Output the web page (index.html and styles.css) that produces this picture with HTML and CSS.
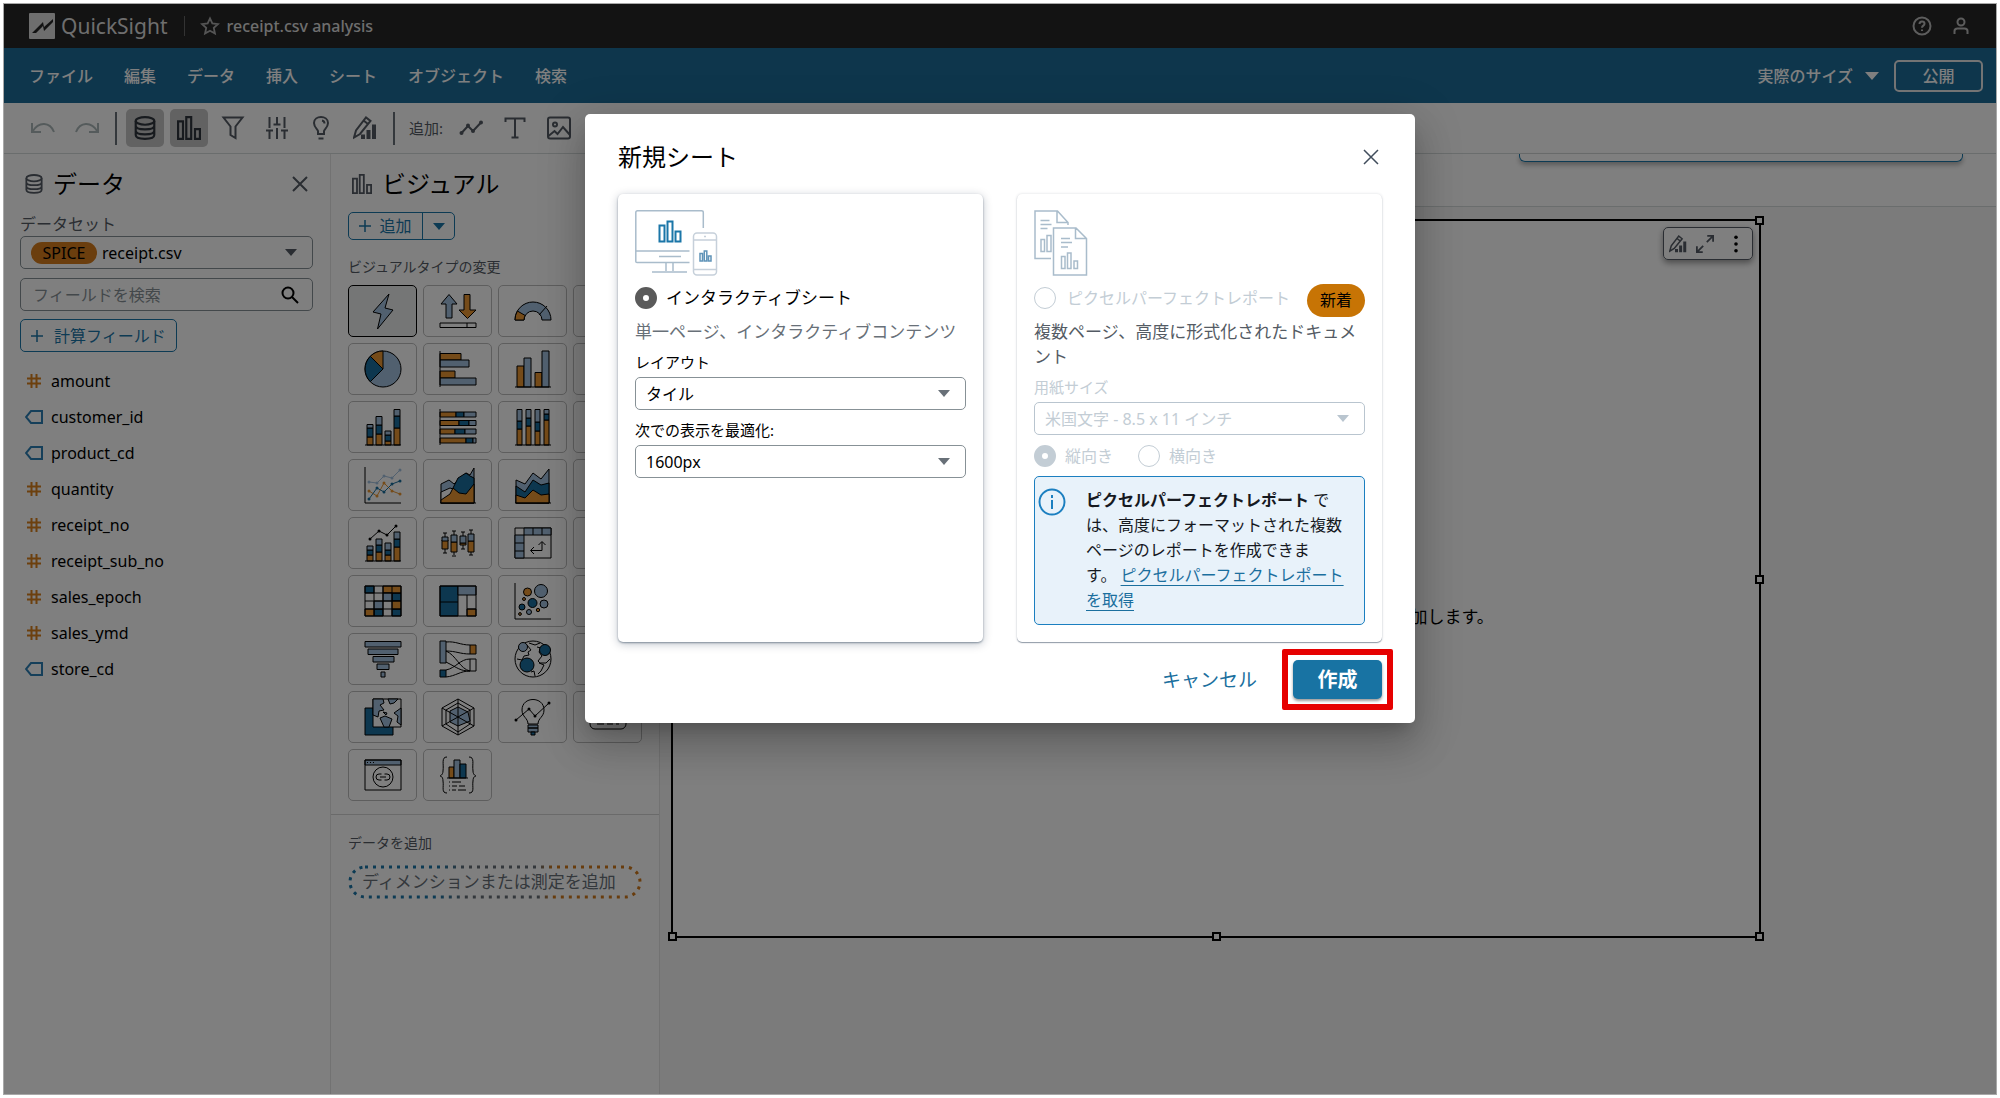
FILE: index.html
```html
<!DOCTYPE html>
<html lang="ja">
<head>
<meta charset="utf-8">
<meta name="viewport" content="width=device-width, initial-scale=1">
<title>receipt.csv analysis - QuickSight</title>
<link rel="stylesheet" href="styles.css">
</head>
<body>
<svg class="sprite" aria-hidden="true">
  <symbol id="db" viewBox="0 0 20 22"><ellipse cx="10" cy="4.500" rx="8.500" ry="3.500"/><path d="M1.500 4.500v13c0 4.600 17 4.600 17 0v-13M1.500 9c0 4.400 17 4.400 17 0M1.500 13.500c0 4.400 17 4.400 17 0"/></symbol>
  <symbol id="bars" viewBox="0 0 22 22"><path d="M1 5h4.500v16H1zM8.500 1h4.500v20H8.500zM16.500 12h4.500v9h-4.500z"/></symbol>
  <symbol id="close" viewBox="0 0 16 16"><path d="M1 1l14 14M15 1L1 15"/></symbol>
  <symbol id="caret" viewBox="0 0 14 8"><path d="M0 0h14L7 8z"/></symbol>
  <symbol id="plus" viewBox="0 0 12 12"><path d="M6 0v12M0 6h12"/></symbol>
  <symbol id="penchart" viewBox="0 0 24 24"><path d="M1 21.500l2-7L13 1.500l4.500 3.500L7 18zM10.500 4.500l4.500 3.500"/><path class="solid" d="M8 18.500h4V23H8zM13.500 14h4v9h-4zM19 8.500h4V23h-4z"/></symbol>
  <symbol id="hash" viewBox="0 0 16 16"><path d="M5.500 1v14M10.500 1v14M1 5.500h14M1 10.500h14"/></symbol>
  <symbol id="tag" viewBox="0 0 18 14"><path d="M6 1h11v12H6L1 7z"/></symbol>
  <symbol id="table" viewBox="0 0 36 36"><path d="M0 3h36v30H0zM0 10h36M0 18h36M0 26h36M12 3v30"/></symbol>
</svg>

<div class="app">
  <header class="topbar">
    <a class="brand" href="#">
      <svg class="logo" viewBox="0 0 26 26"><rect width="26" height="26" rx="1" fill="#ddd"/><path d="M3 20L14 9l1 5 9-8v3l-9 9-1-5-7 7z" fill="#262626"/></svg>
      QuickSight</a>
    <span class="topbar-rule"></span>
    <svg class="star" viewBox="0 0 20 20"><path d="M10 1.500l2.600 5.700 6.200.7-4.600 4.200 1.300 6.200-5.500-3.100-5.500 3.100 1.300-6.200L1.200 7.900l6.200-.7z"/></svg>
    <h1 class="doc-name">receipt.csv analysis</h1>
    <div class="topbar-end">
      <button class="icon-button" aria-label="ヘルプ"><svg width="20" height="20" viewBox="0 0 20 20"><circle cx="10" cy="10" r="8.500"/><path d="M7.500 8c0-3.500 5-3.200 5-.3 0 2-2.500 1.800-2.500 4M10 13.500v1.500"/></svg></button>
      <button class="icon-button" aria-label="アカウント"><svg width="16" height="18" viewBox="0 0 16 18"><circle cx="8" cy="5" r="3.500"/><path d="M1.500 17v-3q0-2.500 3-2.500h7q3 0 3 2.500v3"/></svg></button>
    </div>
  </header>

  <nav class="menubar">
    <a href="#">ファイル</a><a href="#">編集</a><a href="#">データ</a><a href="#">挿入</a><a href="#">シート</a><a href="#">オブジェクト</a><a href="#">検索</a>
    <div class="menubar-end">
      <button class="zoom-button">実際のサイズ<svg class="caret"><use href="#caret"/></svg></button>
      <button class="publish">公開</button>
    </div>
  </nav>

  <div class="toolbar">
    <button class="tool dim" aria-label="元に戻す"><svg width="24" height="24" viewBox="0 0 24 24"><path d="M1 7v9h9M1.500 15.500C8 5 19 6 23 16"/></svg></button>
    <button class="tool dim" aria-label="やり直し"><svg width="24" height="24" viewBox="0 0 24 24"><path d="M23 7v9h-9M22.500 15.500C16 5 5 6 1 16"/></svg></button>
    <span class="tool-rule"></span>
    <button class="tool on" aria-label="データ"><svg width="22" height="24"><use href="#db"/></svg></button>
    <button class="tool on" aria-label="ビジュアル"><svg width="24" height="24"><use href="#bars"/></svg></button>
    <button class="tool" aria-label="フィルター"><svg width="24" height="24" viewBox="0 0 24 24"><path d="M2.500 1.500h19l-7 9V22L9.500 19v-8.500z"/></svg></button>
    <button class="tool" aria-label="パラメータ"><svg width="24" height="24" viewBox="0 0 24 24"><path d="M4.500 1v11M1 14.500h7M4.500 14.500V23M12 1v7.500M8.500 8.500h7M12 12v11M19.500 1v11M16 14.500h7M19.500 14.500V23"/></svg></button>
    <button class="tool" aria-label="インサイト"><svg width="24" height="24" viewBox="0 0 24 24"><path d="M9 18v-3c0-1.500-4-3.500-4-8 0-8 14-8 14 0 0 4.500-4 6.500-4 8v3zM9.500 22.500h5M13 4.500q2.500.5 2.500 3"/></svg></button>
    <button class="tool" aria-label="テーマ"><svg width="24" height="24"><use href="#penchart"/></svg></button>
    <span class="tool-rule"></span>
    <span class="tool-label">追加:</span>
    <button class="tool" aria-label="ビジュアルを追加"><svg width="24" height="24" viewBox="0 0 24 24"><path d="M2.500 17L9 10l5 5 8-8.500"/><g class="solid"><circle cx="2.500" cy="17" r="2"/><circle cx="9" cy="9.500" r="2"/><circle cx="14" cy="15" r="2"/><circle cx="22" cy="6.500" r="2"/></g></svg></button>
    <button class="tool" aria-label="テキストを追加"><svg width="24" height="24" viewBox="0 0 24 24"><path d="M2.500 6V2.500h19V6M12 2.500v19M8.500 21.500h7"/></svg></button>
    <button class="tool" aria-label="画像を追加"><svg width="24" height="24" viewBox="0 0 24 24"><rect x="1" y="1.500" width="22" height="21" rx="2"/><circle cx="8" cy="8.500" r="2"/><path d="M1.500 20l6-5 3 3 5.500-7 7 8"/></svg></button>
  </div>

  <div class="workspace">
    <section class="panel data-panel">
      <div class="panel-head">
        <svg width="18" height="20"><use href="#db"/></svg>
        <h2>データ</h2>
        <button class="icon-button panel-close" aria-label="閉じる"><svg width="16" height="16"><use href="#close"/></svg></button>
      </div>
      <span class="field-label" id="dataset-label">データセット</span>
      <button class="box dataset" aria-labelledby="dataset-label" aria-haspopup="listbox"><span class="spice">SPICE</span><span>receipt.csv</span><svg class="caret"><use href="#caret"/></svg></button>
      <div class="box search">
        <input type="text" placeholder="フィールドを検索" aria-label="フィールドを検索">
        <svg width="18" height="18" viewBox="0 0 18 18"><circle cx="7" cy="7" r="5.500"/><path d="M11 11l6 6"/></svg>
      </div>
      <button class="box calc"><svg width="12" height="12"><use href="#plus"/></svg>計算フィールド</button>
      <ul class="fields">
        <li><svg class="hash"><use href="#hash"/></svg>amount</li>
        <li><svg class="tag"><use href="#tag"/></svg>customer_id</li>
        <li><svg class="tag"><use href="#tag"/></svg>product_cd</li>
        <li><svg class="hash"><use href="#hash"/></svg>quantity</li>
        <li><svg class="hash"><use href="#hash"/></svg>receipt_no</li>
        <li><svg class="hash"><use href="#hash"/></svg>receipt_sub_no</li>
        <li><svg class="hash"><use href="#hash"/></svg>sales_epoch</li>
        <li><svg class="hash"><use href="#hash"/></svg>sales_ymd</li>
        <li><svg class="tag"><use href="#tag"/></svg>store_cd</li>
      </ul>
    </section>

    <section class="panel visual-panel">
      <div class="panel-head">
        <svg width="20" height="20"><use href="#bars"/></svg>
        <h2>ビジュアル</h2>
      </div>
      <div class="split">
        <button class="split-main"><svg width="12" height="12"><use href="#plus"/></svg>追加</button>
        <button class="split-more" aria-label="追加オプション"><svg class="caret"><use href="#caret"/></svg></button>
      </div>
      <h3>ビジュアルタイプの変更</h3>
      <div class="types">
        <button class="type selected" aria-label="自動グラフ"><svg viewBox="0 0 36 36"><path class="l" d="M24 1L8 19l8 2-3.500 15L28 17l-8-2z"/></svg></button>
        <button class="type" aria-label="KPI"><svg viewBox="0 0 36 36"><path class="l" d="M9 1.500l8 9.500h-5v14H6V11H1z"/><path class="o" d="M24 1.500h6V17h6l-8.500 8.500L19 17h5z"/><path d="M0 30h36v4.500H0zM27 30v4.500"/></svg></button>
        <button class="type" aria-label="ゲージ"><svg viewBox="0 0 36 36"><path class="l" d="M0 27a18 18 0 0 1 36 0h-9a9 9 0 0 0-18 0z"/><path class="o" d="M0 27a18 18 0 0 1 2.400-9l7.800 4.500A9 9 0 0 0 9 27z"/><path d="M24 22l8-9"/></svg></button>
        <button class="type" aria-label="ドーナツ"><svg><use href="#table"/></svg></button>

        <button class="type" aria-label="円グラフ"><svg viewBox="0 0 36 36"><circle class="l" cx="18" cy="18" r="18"/><path class="o" d="M18 18V0A18 18 0 0 0 5.300 5.300z"/><path class="d" d="M18 18L5.300 5.300a18 18 0 0 0 0 25.400z"/></svg></button>
        <button class="type" aria-label="横棒"><svg viewBox="0 0 36 36"><path class="o" d="M0 2.500h21V9H0zM0 20h15v7H0z"/><path class="l" d="M0 9h29v7H0zM0 27h36v7H0z"/><path d="M0 0v36"/></svg></button>
        <button class="type" aria-label="縦棒"><svg viewBox="0 0 36 36"><path class="o" d="M2 15h7v21H2zM20 21.500h7V36h-7z"/><path class="l" d="M9 7h7v29H9zM27 0h7v36h-7z"/><path d="M0 36h36"/></svg></button>
        <button class="type" aria-label="積み上げ横棒"><svg><use href="#table"/></svg></button>

        <button class="type" aria-label="積み上げ縦棒"><svg viewBox="0 0 36 36"><path class="o" d="M2 28h6v8H2zM11 25h6v11h-6zM20 32h6v4h-6zM29 19h6v17h-6z"/><path class="d" d="M2 19h6v9H2zM11 16h6v9h-6zM20 26h6v6h-6zM29 7h6v12h-6z"/><path class="l" d="M2 15.500h6V19H2zM11 7.500h6V16h-6zM20 22h6v4h-6zM29 .5h6V7h-6z"/><path d="M0 36h36"/></svg></button>
        <button class="type" aria-label="100% 横棒"><svg viewBox="0 0 36 36"><path class="o" d="M0 3h16v5H0zM0 11.500h19v5H0zM0 20h15v5H0zM0 29h26v5H0z"/><path class="d" d="M16 3h8v5h-8zM19 11.500h10v5H19zM15 20h10v5H15zM26 29h7v5h-7z"/><path class="l" d="M24 3h12v5H24zM29 11.500h7v5h-7zM25 20h11v5H25zM33 29h3v5h-3z"/><path d="M0 0v36"/></svg></button>
        <button class="type" aria-label="100% 縦棒"><svg viewBox="0 0 36 36"><path class="o" d="M2 20h5v16H2zM11 17h5v19h-5zM20 22h5v14h-5zM29 11h5v25h-5z"/><path class="d" d="M2 12h5v8H2zM11 9h5v8h-5zM20 13h5v9h-5zM29 5h5v6h-5z"/><path class="l" d="M2 .5h5V12H2zM11 .5h5V9h-5zM20 .5h5V13h-5zM29 .5h5V5h-5z"/><path d="M0 36h36"/></svg></button>
        <button class="type" aria-label="ウォーターフォール"><svg><use href="#table"/></svg></button>

        <button class="type" aria-label="折れ線"><svg viewBox="0 0 36 36"><path d="M0 0v36h36"/><g class="line-l"><path d="M4 15l8 1 7-7 8 2 8-8"/><path class="dot" d="M4 15h0M12 16h0M19 9h0M27 11h0M35 3h0"/></g><g class="line-o"><path d="M4 24l8 5 7-13 8 8 8 3"/><path class="dot" d="M4 24h0M12 29h0M19 16h0M27 24h0M35 27h0"/></g><g class="line-d"><path d="M4 32l8-11 7 4 8-8 8-3"/><path class="dot" d="M4 32h0M12 21h0M19 25h0M27 17h0M35 14h0"/></g></svg></button>
        <button class="type" aria-label="面"><svg viewBox="0 0 36 36"><path class="l" d="M1 17l8-4 5 4 12-11 4 2 4-7v35H1z"/><path class="paper" d="M1 25l9-4 3 1v14H1z"/><path class="d" d="M13 21l5-10 8-5 4 3 4 2v25H13z"/><path class="o" d="M1 33l9-6 3-6 6 5 7 1 8-10v19H1z"/><path d="M0 36h36"/></svg></button>
        <button class="type" aria-label="積み上げ面"><svg viewBox="0 0 36 36"><path class="l" d="M1 13l9 4 8-11 8 6 8-10v34H1z"/><path class="d" d="M1 19l9 6 8-12 8 5 8-2v20H1z"/><path class="o" d="M1 28l9 3 8-8 8 5 8-1v9H1z"/><path d="M0 36h36"/></svg></button>
        <button class="type" aria-label="滝"><svg><use href="#table"/></svg></button>

        <button class="type" aria-label="コンボ"><svg viewBox="0 0 36 36"><path class="o" d="M2 30h6v6H2zM11 27h6v9h-6zM20 30h6v6h-6zM29 22h6v14h-6z"/><path class="d" d="M2 25h6v5H2zM11 20h6v7h-6zM20 25h6v5h-6zM29 14h6v8h-6z"/><path class="l" d="M2 21h6v4H2zM11 14h6v6h-6zM20 18h6v7h-6zM29 7h6v7h-6z"/><path d="M0 36h36M5 14l9-8 8 4 9-9"/><path class="dot" d="M5 14h0M14 6h0M22 10h0M31 1h0"/></svg></button>
        <button class="type" aria-label="箱ひげ図"><svg viewBox="0 0 36 36"><path d="M3 8h4M5 8v20M3 28h4M12 6h4M14 6v24M12 31h4M21 7h4M23 7v17M21 24h4M29 5h4M31 5v25M29 30h4"/><path class="o" d="M2 15h6v9H2zM11 17h6v10h-6zM20 18h6v2h-6zM28 16h6v11h-6z"/><path class="l" d="M2 12h6v4H2zM11 10h6v7h-6zM20 11h6v7h-6zM28 9h6v7h-6z"/></svg></button>
        <button class="type" aria-label="ピボットテーブル"><svg viewBox="0 0 36 36"><path d="M0 3h36v30H0z"/><path class="l" d="M9 3h27v7H9zM0 10h9v23H0z"/><path d="M18 3v7M27 3v7M0 18h9M0 26h9M16 25.500h11V17M19 22l-3.500 3.500L19 29M23.500 20l3.500-3.500 3.500 3.500"/></svg></button>
        <button class="type" aria-label="テーブル"><svg><use href="#table"/></svg></button>

        <button class="type" aria-label="ヒートマップ"><svg viewBox="0 0 36 36"><path class="d" d="M0 3h9v7H0zM27 10h9v8h-9zM9 26h9v7H9zM27 26h9v7h-9z"/><path class="o" d="M18 3h18v7H18zM27 18h9v8h-9zM0 26h9v7H0z"/><path class="l" d="M18 10h9v8h-9zM9 18h9v8H9z"/><path d="M0 3h36v30H0zM9 3v30M18 3v30M27 3v30M0 10h36M0 18h36M0 26h36"/></svg></button>
        <button class="type" aria-label="ツリーマップ"><svg viewBox="0 0 36 36"><path class="d" d="M0 3h18v30H0zM0 19h18"/><path class="l" d="M18 3h18v9H18z"/><path class="o" d="M27 26h9v7h-9z"/><path d="M0 3h36v30H0zM27 12v21M27 26h9"/></svg></button>
        <button class="type" aria-label="散布図"><svg viewBox="0 0 36 36"><path d="M0 0v36h36"/><g class="l"><circle cx="26" cy="8" r="6.500"/><circle cx="29" cy="21" r="4"/><circle cx="14" cy="29" r="2.500"/></g><g class="o"><circle cx="12.500" cy="9" r="4"/><circle cx="9" cy="16" r="1.500"/><circle cx="23" cy="27" r="1.700"/><circle cx="5" cy="31" r="1.400"/></g><g class="d"><circle cx="17.500" cy="20" r="4.500"/><circle cx="7" cy="24" r="3"/></g></svg></button>
        <button class="type" aria-label="ヒストグラム"><svg><use href="#table"/></svg></button>

        <button class="type" aria-label="ファネル"><svg viewBox="0 0 36 36"><path class="l" d="M0 .5h36V6H0zM3 8h30v5.500H3zM8 15.500h21V21H8zM12 23h12v5.500H12zM16 31h4v5h-4z"/></svg></button>
        <button class="type" aria-label="サンキー"><svg viewBox="0 0 36 36"><path class="l" d="M0 0h6v22H0z"/><path class="d" d="M0 29h6v7H0z"/><path class="o" d="M30 4h6v9h-6z"/><path d="M30 18h6v12h-6zM6 1c10-1 14 3 24 3M6 10c10 0 14 3 24 3M6 10c10 4 14 18 24 20M6 21c12 6 14 9 24 9M6 29c10-2 14-11 24-11M6 36c10-1 14-6 24-6"/></svg></button>
        <button class="type" aria-label="ポイントマップ"><svg viewBox="0 0 36 36"><circle cx="18" cy="18" r="18"/><path d="M12 4l4 5-3 2 1 3-5 1-2 4-5-1M14 2l6 2 5-2M22 6l4 1-2 4 3 4-4 5 2 2 6 0 4-4M16 31l3-1 1 5M24 22l5 2-3 6-3 3"/><circle class="l" cx="8" cy="6" r="4.500"/><circle class="d" cx="30" cy="9" r="5.500"/><circle class="d" cx="12" cy="24" r="7"/></svg></button>
        <button class="type" aria-label="ワードクラウド"><svg><use href="#table"/></svg></button>

        <button class="type" aria-label="塗りつぶしマップ"><svg viewBox="0 0 36 36"><path class="d" d="M0 9h28v27H0z"/><path class="paper" d="M8 0h28v28H8z"/><path class="l" d="M8 0h10l1 4-4 2 4 5-5 1-1 6-5-2zM23 0h10l-4 4-4 1zM29 14l7-5v17l-4-3 1-6zM15 19l5-2 7 3-3 8h-5zM18 13l4 1-1 2z"/></svg></button>
        <button class="type" aria-label="レーダー"><svg viewBox="0 0 36 36"><path d="M18 0l16 9v18l-16 9-16-9V9zM18 4l12 7v14l-12 8-12-8V11z"/><path class="l" d="M18 8l10 5 2 9-12 5-8-4V12z"/><path d="M18 0v36M2 9l32 18M34 9L2 27"/></svg></button>
        <button class="type" aria-label="インサイト"><svg viewBox="0 0 36 36"><path d="M13 25c0-6-6-7-6-14 0-14 22-14 22 0 0 7-6 8-6 14z"/><path class="l" d="M13 26h10v3H13zM13 29h10v4H13z"/><path class="d" d="M16 33h4v3h-4z"/><path d="M1 21l13-11 6 7L34 4"/><path class="dot" d="M1 21h0M14 10h0M20 17h0M34 4h0"/></svg></button>
        <button class="type" aria-label="カスタムビジュアル"><svg viewBox="0 0 36 36"><rect x="0" y="7" width="36" height="23" rx="5"/><path d="M7 25h7M17 25h6M26 25h3M7 19h9M19 19h8"/></svg></button>

        <button class="type" aria-label="カスタムコンテンツ"><svg viewBox="0 0 36 36"><path class="l" d="M0 3h36v5H0z"/><path d="M0 3h36v30H0z"/><circle cx="18" cy="20" r="10"/><path d="M16.500 17H14a3 3 0 0 0 0 6h2.500M19.500 17H22a3 3 0 0 1 0 6h-2.500M15 20h6M2 5.500h1M5 5.500h1M8 5.500h1"/></svg></button>
        <button class="type" aria-label="Highcharts"><svg viewBox="0 0 36 36"><path class="o" d="M9 10h5v11H9z"/><path class="l" d="M14 3h6v18h-6z"/><path class="d" d="M20 7h6v14h-6z"/><path d="M7 21h21M7 0C1 0 4 7 3 14c0 4-3 5-3 5s3 0 3 5c1 6-2 12 4 12M29 0c6 0 3 7 4 14 0 4 3 5 3 5s-3 0-3 5c-1 6 2 12-4 12M9 25h1M12 25h9M9 29h1M12 29h5M19 29h6M9 33h1M12 33h4M18 33h8"/></svg></button>
      </div>
      <div class="add-data">
        <h3>データを追加</h3>
        <div class="drop">
          <svg width="100%" height="34"><defs><linearGradient id="pill"><stop offset="0.300" stop-color="#1b76a8"/><stop offset="0.400" stop-color="#687078"/><stop offset="0.650" stop-color="#687078"/><stop offset="0.700" stop-color="#d0791a"/></linearGradient></defs><rect class="pill" x="2" y="2" width="290" height="30" rx="15"/></svg>
          <span>ディメンションまたは測定を追加</span>
        </div>
      </div>
    </section>

    <main class="sheet">
      <div class="sheet-head"><div class="sheet-callout"></div></div>
      <div class="canvas">
        <div class="visual">
          <div class="visual-tools">
            <button class="icon-button" aria-label="プロパティ"><svg width="20" height="20"><use href="#penchart"/></svg></button>
            <button class="icon-button" aria-label="最大化"><svg width="20" height="20" viewBox="0 0 20 20"><path d="M12 8l7-7M12.500 1H19v6.500M8 12l-7 7M1 12.500V19h6.500"/></svg></button>
            <button class="icon-button more" aria-label="メニュー"><svg width="20" height="20" viewBox="0 0 20 20"><circle cx="10" cy="2.500" r="2"/><circle cx="10" cy="10" r="2"/><circle cx="10" cy="17.500" r="2"/></svg></button>
          </div>
          <p>ビジュアルを作成するには、ディメンション、または測定を追加します。</p>
          <i class="handle nw"></i><i class="handle ne"></i><i class="handle e"></i><i class="handle se"></i><i class="handle s"></i><i class="handle sw"></i>
        </div>
      </div>
    </main>
  </div>

  <div class="backdrop">
    <form class="modal" role="dialog" aria-labelledby="modal-title">
      <div class="modal-head">
        <h2 id="modal-title">新規シート</h2>
        <button type="button" class="icon-button" aria-label="閉じる"><svg width="16" height="16"><use href="#close"/></svg></button>
      </div>
      <div class="cards">
        <div class="card active">
          <svg class="art" width="82" height="66" viewBox="0 0 82 66"><path d="M54.500 41H.8V2.500Q.8.800 2.500.8h64Q68.300.8 68.300 2.500V18M.8 41v10.500Q.8 52.500 2 52.500h52.500M24 46.500h22M31 53v8M38 53v8M17 62h35"/><path class="strong" d="M24.500 15.500h5v16h-5zM32.500 11.500h5v20h-5zM40.500 21.500h5v10h-5z"/><g class="phone"><rect x="58.500" y="23" width="23" height="42" rx="3.500"/><path d="M58.500 30h23M58.500 59.500h23M69 26.500h2"/></g><path class="mid" d="M65 43.500h2.500v7.500H65zM69.300 41h2.500v10h-2.500zM73.500 46h2.500v5h-2.500z"/></svg>
          <label class="choice"><input type="radio" name="kind" checked><span>インタラクティブシート</span></label>
          <p class="desc">単一ページ、インタラクティブコンテンツ</p>
          <label class="form-label" for="layout">レイアウト</label>
          <div class="select"><select id="layout"><option>タイル</option></select><svg class="caret"><use href="#caret"/></svg></div>
          <label class="form-label" for="optimize">次での表示を最適化:</label>
          <div class="select"><select id="optimize"><option>1600px</option></select><svg class="caret"><use href="#caret"/></svg></div>
        </div>
        <div class="card off">
          <svg class="art" width="54" height="66" viewBox="0 0 54 66"><path d="M17 48.500H1V1h22.500L34 12.500V15M23 1v11.500h11M6.500 10.500h9M6.500 14.500h11M6.500 18.500h7M7 29.500h3.500v12H7zM17 25.500h-4v16h4z"/><path d="M19.500 18H42l10.500 10.500V65h-33zM41.500 18v10.500h11M27 28.500h9M27 32.500h11M27 37h7M27.500 46.500h3.500v12h-3.500zM33.500 43h3.500v15.500h-3.500zM40 51h3.500v7.500H40z"/></svg>
          <div class="choice-row"><label class="choice"><input type="radio" name="kind" disabled><span>ピクセルパーフェクトレポート</span></label><span class="badge">新着</span></div>
          <p class="desc">複数ページ、高度に形式化されたドキュメ<br>ント</p>
          <label class="form-label" for="paper">用紙サイズ</label>
          <div class="select"><select id="paper" disabled><option>米国文字 - 8.5 x 11 インチ</option></select><svg class="caret"><use href="#caret"/></svg></div>
          <div class="orient">
            <label class="choice"><input type="radio" name="orient" checked disabled><span>縦向き</span></label>
            <label class="choice"><input type="radio" name="orient" disabled><span>横向き</span></label>
          </div>
          <div class="info">
            <svg width="28" height="28" viewBox="0 0 28 28"><circle cx="14" cy="14" r="12.500"/><path d="M14 12v9M14 7v3"/></svg>
            <p><strong>ピクセルパーフェクトレポート</strong> で<br>は、高度にフォーマットされた複数<br>ページのレポートを作成できま<br>す。 <a href="#">ピクセルパーフェクトレポート<br>を取得</a></p>
          </div>
        </div>
      </div>
      <div class="modal-foot">
        <button type="button" class="cancel">キャンセル</button>
        <span class="highlight"><button type="button" class="create">作成</button></span>
      </div>
    </form>
  </div>
</div>
</body>
</html>
```
FILE: styles.css
```css
* { box-sizing: border-box; }

body {
  margin: 0;
  padding: 3px;
  background: #fff;
  color: #000;
  font: 16px/24px "Noto Sans", "Noto Sans CJK JP", sans-serif;
}

h1, h2, h3, p, ul { margin: 0; padding: 0; font-weight: 400; }
button, input, select { font: inherit; color: inherit; margin: 0; }
button { padding: 0; border: 0; background: none; }
svg { flex: none; overflow: visible; fill: none; stroke: currentColor; stroke-width: 2; }
.sprite { position: absolute; width: 0; height: 0; }
.solid { fill: currentColor; stroke: none; }
.caret { width: 12px; height: 7px; fill: currentColor; stroke: none; }
.icon-button { display: flex; align-items: center; justify-content: center; }

.app {
  position: relative;
  display: flex;
  flex-direction: column;
  min-height: calc(100vh - 6px);
  border: 1px solid #a8a8a8;
}

/* Top bar */
.topbar {
  display: flex;
  align-items: center;
  height: 44px;
  padding: 0 27px 0 25px;
  background: #262626;
  color: #ddd;
}
.brand { display: flex; align-items: center; gap: 6px; color: inherit; font-size: 21px; text-decoration: none; }
.logo { width: 26px; height: 26px; stroke: none; }
.topbar-rule { width: 1px; height: 20px; margin: 0 16px; background: #666; }
.star { width: 18px; height: 18px; margin-right: 8px; color: #aaa; }
.doc-name { font-size: 16px; font-weight: 500; }
.topbar-end { display: flex; gap: 21px; margin-left: auto; color: #bbb; }

/* Menu bar */
.menubar {
  display: flex;
  align-items: center;
  gap: 31px;
  height: 55px;
  padding: 0 13px 0 25px;
  background: #1c6c98;
  color: #fff;
  font-weight: 500;
}
.menubar a { color: inherit; text-decoration: none; }
.menubar-end { display: flex; gap: 15px; margin-left: auto; }
.zoom-button { display: flex; align-items: center; gap: 12px; font-weight: 500; }
.menubar .caret { width: 14px; height: 8px; }
.publish { width: 89px; height: 32px; border: 2px solid #e8e8e8; border-radius: 5px; font-weight: 500; }

/* Tool bar */
.toolbar {
  display: flex;
  align-items: center;
  gap: 6px;
  height: 51px;
  padding: 0 20px;
  border-bottom: 1px solid #d5dbdb;
  background: #fff;
  color: #545b64;
}
.tool { display: flex; align-items: center; justify-content: center; width: 38px; height: 38px; border-radius: 5px; }
.tool.dim { color: #aab7b8; }
.tool.on { background: #c4c4c4; color: #2f353d; }
.tool-rule { width: 2px; height: 33px; margin: 0 3px; background: #687078; }
.tool-label { margin: 0 3px 0 5px; font-size: 15px; }

/* Workspace */
.workspace { display: flex; flex: 1; background: #fff; }
.panel { flex: none; border-right: 1px solid #e4e4e4; }
.panel-head { display: flex; align-items: center; height: 32px; color: #545b64; }
.panel-head h2 { margin-left: 10px; color: #000; font-size: 24px; line-height: 32px; }
.panel-close { margin-left: auto; }

.data-panel { width: 327px; padding: 14px 17px 0 16px; }
.data-panel .panel-head { padding: 0 5px; }
.field-label { display: block; margin-top: 12px; color: #545b64; }
.box {
  display: flex;
  align-items: center;
  width: 100%;
  height: 33px;
  border: 1px solid #879196;
  border-radius: 5px;
}
.dataset { gap: 5px; padding: 0 15px 0 10px; }
.dataset .caret { margin-left: auto; color: #545b64; }
.spice { width: 66px; border-radius: 11px; background: #d67c1c; color: #000; line-height: 22px; }
.search { margin-top: 9px; padding: 0 13px 0 12px; }
.search svg { color: #000; }
.search input { flex: 1; min-width: 0; padding: 0; border: 0; outline: 0; background: none; }
.search input::placeholder { color: #879196; opacity: 1; }
.calc { gap: 11px; width: 157px; margin-top: 8px; padding-left: 10px; border-color: #1b76a8; color: #1b76a8; }
.calc svg, .split svg { stroke-width: 1.5px; }
.fields { margin-top: 11px; list-style: none; }
.fields li { display: flex; align-items: center; gap: 8px; height: 36px; padding-left: 5px; }
.fields svg { width: 18px; height: 16px; }
.hash { color: #d9801c; }
.tag { color: #2b7fb5; }

.visual-panel { width: 329px; padding: 14px 17px 0; }
.visual-panel .panel-head { padding: 0 4px; }
.split { display: flex; width: 107px; height: 28px; margin-top: 12px; border: 1px solid #1b76a8; border-radius: 5px; color: #1b76a8; }
.split-main { display: flex; flex: 1; align-items: center; justify-content: center; gap: 8px; }
.split-more { width: 32px; border-left: 1px solid #1b76a8; line-height: 0; }
h3 { color: #545b64; font-size: 14px; line-height: 20px; }
.visual-panel > h3 { margin-top: 17px; }
.types { display: grid; grid-template-columns: repeat(4, 1fr); gap: 6px; margin-top: 8px; }
.type { display: flex; align-items: center; justify-content: center; height: 52px; border: 1px solid #bcbcbc; border-radius: 5px; }
.type.selected { border: 1px solid #000; background: #eaeded; }
.type svg { width: 36px; height: 36px; color: #000; stroke-width: 1; }
.type .l { fill: #a3c1de; }
.type .d { fill: #1b6f9e; }
.type .o { fill: #ea9733; }
.type .paper { fill: #fff; }
.type .line-l { stroke: #a3c1de; }
.type .line-o { stroke: #ea9733; }
.type .line-d { stroke: #1b6f9e; }
.type .dot { stroke-width: 3; stroke-linecap: round; }
.add-data { margin: 13px -17px 0; padding: 18px 17px; border-top: 1px solid #d5d5d5; }
.drop { display: grid; align-items: center; margin-top: 12px; color: #687078; }
.drop > * { grid-area: 1 / 1; }
.drop span { padding-left: 14px; font-size: 17px; }
.pill { stroke: url(#pill); stroke-width: 3; stroke-dasharray: 3 5; }

.sheet { display: flex; flex: 1; flex-direction: column; min-width: 0; }
.sheet-head { display: flex; justify-content: flex-end; height: 53px; padding-right: 33px; border-bottom: 1px solid #d5dbdb; }
.sheet-callout { width: 444px; height: 8px; border: 1px solid #1b76a8; border-top: 0; border-radius: 0 0 6px 6px; box-shadow: 0 3px 5px rgba(0, 0, 0, 0.3); }
.canvas { flex: 1; padding: 12px 235px 12px 11px; background: #f7f7f7; }
.visual {
  position: relative;
  display: flex;
  flex-direction: column;
  align-items: center;
  height: 719px;
  padding: 6px;
  border: 2px solid #000;
  background: #fff;
}
.visual p { margin-top: 345px; font-size: 17px; white-space: nowrap; }
.visual-tools {
  display: flex;
  align-items: center;
  align-self: flex-end;
  gap: 9px;
  height: 33px;
  padding: 0 7px 0 5px;
  border: 1px solid #545b64;
  border-radius: 5px;
  box-shadow: 0 3px 6px rgba(0, 0, 0, 0.4);
  color: #545b64;
}
.visual-tools svg { width: 18px; height: 18px; }
.visual-tools .more { margin-left: 4px; color: #000; }
.visual-tools .more svg { fill: currentColor; stroke: none; }
.handle { position: absolute; width: 9px; height: 9px; border: 2px solid #000; background: #fff; }
.nw { top: -5px; left: -5px; }
.ne { top: -5px; right: -5px; }
.e { top: calc(50% - 4px); right: -5px; }
.se { right: -5px; bottom: -5px; }
.s { bottom: -5px; left: calc(50% - 4px); }
.sw { bottom: -5px; left: -5px; }

/* Dialog */
.backdrop {
  position: absolute;
  inset: 0;
  display: flex;
  align-items: flex-start;
  justify-content: center;
  padding-top: 110px;
  background: rgba(0, 0, 0, 0.5);
}
.modal {
  width: 830px;
  padding: 0 33px;
  border-radius: 5px;
  background: #fff;
  box-shadow: 0 11px 15px -7px rgba(0, 0, 0, 0.2), 0 24px 38px 3px rgba(0, 0, 0, 0.14), 0 9px 46px 8px rgba(0, 0, 0, 0.12);
}
.modal-head { display: flex; align-items: center; justify-content: space-between; padding: 23px 3px 17px 0; }
.modal-head h2 { font-size: 24px; line-height: 40px; }
.modal-head svg { color: #414d5c; stroke-width: 1.5px; }
.cards { display: grid; grid-template-columns: 1fr 1fr; gap: 34px; }
.card { padding: 16px 17px 17px; border-radius: 5px; }
.card.active { box-shadow: 0 1px 2px rgba(0, 28, 56, 0.4), 0 2px 10px rgba(0, 28, 56, 0.25); }
.card.off { box-shadow: 0 1px 1px rgba(0, 28, 56, 0.4), 0 0 3px rgba(0, 28, 56, 0.15); color: #c3cdd5; }
.art { display: block; stroke: #a9bccb; stroke-width: 1.5px; }
.art .strong { stroke: #1b76a8; stroke-width: 2px; }
.art .mid { stroke: #5f93b8; }
.art .phone { stroke: #c6d0da; }
.choice { display: flex; align-items: center; gap: 9px; height: 24px; font-size: 17px; }
.card > .choice, .choice-row { margin-top: 10px; }
.choice input {
  flex: none;
  width: 22px;
  height: 22px;
  border: 1px solid #c3cdd5;
  border-radius: 50%;
  appearance: none;
  background: #fff;
}
.choice input:checked { border: 8px solid #5a5a5a; }
.choice input:disabled:checked { border-color: #c3cdd5; }
.choice-row { display: flex; justify-content: space-between; height: 24px; }
.choice-row .choice { gap: 11px; font-size: 16px; }
.badge { width: 58px; height: 33px; margin-top: -2px; border-radius: 17px; background: #c77405; color: #000; line-height: 32px; text-align: center; }
.desc { margin-top: 9px; color: #687078; font-size: 17px; line-height: 25px; white-space: nowrap; }
.off .desc { color: #545b64; }
.form-label { display: block; margin-top: 7px; font-size: 15px; line-height: 22px; }
.select { display: grid; align-items: center; margin-top: 4px; }
.select + .form-label { margin-top: 9px; }
.select > * { grid-area: 1 / 1; }
.select select {
  width: 100%;
  height: 33px;
  padding: 0 10px;
  border: 1px solid #879196;
  border-radius: 5px;
  appearance: none;
  background: #fff;
}
.select select:disabled { border-color: #b9c5cf; color: #c3cdd5; opacity: 1; }
.select .caret { justify-self: end; margin-right: 16px; color: #687078; }
.off .caret { color: #b9c5cf; }
.orient { display: flex; gap: 25px; margin-top: 9px; }
.orient .choice { font-size: 16px; }
.info { display: flex; gap: 20px; margin-top: 8px; padding: 11px 0 11px 3px; border: 1px solid #1b7fc0; border-radius: 5px; background: #e8f2fa; color: #16191f; }
.info svg { color: #1b7fc0; }
.info p { line-height: 25px; white-space: nowrap; }
.info a { color: #1b6f9e; text-underline-offset: 4px; }
.modal-foot { display: flex; align-items: center; justify-content: flex-end; gap: 25px; padding: 7px 0 13px; font-size: 20px; }
.cancel { color: #1b6f9e; font-size: 19px; }
.highlight { display: flex; margin-right: -11px; padding: 5px; border: 6px solid #e60000; border-radius: 2px; }
.create {
  width: 89px;
  height: 39px;
  border-radius: 5px;
  background: #1873a3;
  box-shadow: 0 2px 3px rgba(0, 0, 0, 0.4);
  color: #fff;
  font-weight: 700;
}
```
